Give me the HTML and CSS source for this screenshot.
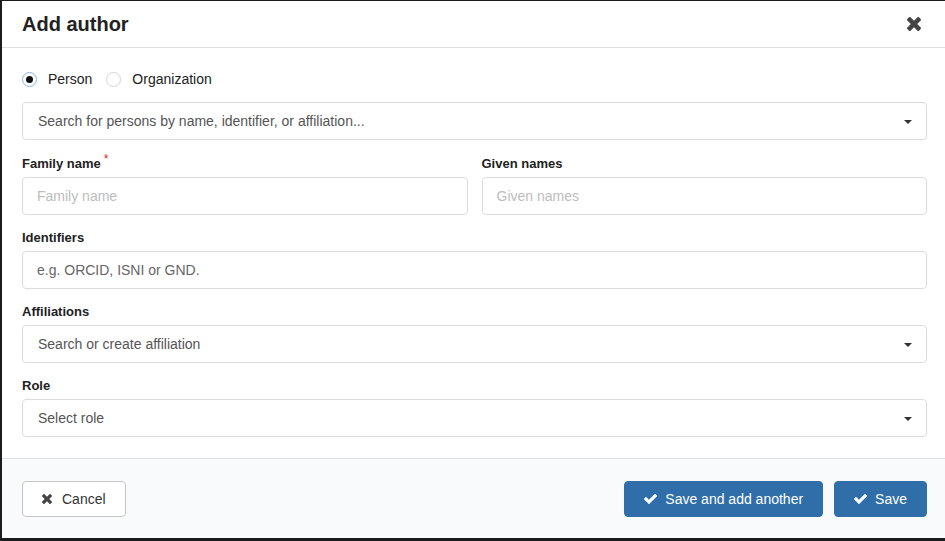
FILE: index.html
```html
<!DOCTYPE html>
<html lang="en">
<head>
    <meta charset="UTF-8">
    <title>Add author</title>
    <link rel="stylesheet" href="styles.css">
</head>
<body>

<div class="modal">

    <!-- Header -->
    <div class="modal-header">
        <h1>Add author</h1>
        <svg class="close-icon" viewBox="110 132 1188 1188"><path d="M1298 1088q0 40-28 68l-136 136q-28 28-68 28t-68-28l-294-294-294 294q-28 28-68 28t-68-28l-136-136q-28-28-28-68t28-68l294-294-294-294q-28-28-28-68t28-68l136-136q28-28 68-28t68 28l294 294 294-294q28-28 68-28t68 28l136 136q28 28 28 68t-28 68l-294 294 294 294q28 28 28 68z"/></svg>
    </div>

    <!-- Form -->
    <div class="modal-content">
        <div class="radio-row">
            <label class="radio checked"><span class="circle"></span>Person</label>
            <label class="radio"><span class="circle"></span>Organization</label>
        </div>

        <div class="dropdown">
            <span class="text">Search for persons by name, identifier, or affiliation...</span>
            <span class="caret"></span>
        </div>

        <div class="two-cols">
            <div class="field">
                <label class="required">Family name</label>
                <input type="text" placeholder="Family name">
            </div>
            <div class="field">
                <label>Given names</label>
                <input type="text" placeholder="Given names">
            </div>
        </div>

        <div class="field">
            <label>Identifiers</label>
            <input type="text" class="dark-placeholder" placeholder="e.g. ORCID, ISNI or GND.">
        </div>

        <div class="field">
            <label>Affiliations</label>
            <div class="dropdown">
                <span class="text">Search or create affiliation</span>
                <span class="caret"></span>
            </div>
        </div>

        <div class="field">
            <label>Role</label>
            <div class="dropdown">
                <span class="text">Select role</span>
                <span class="caret"></span>
            </div>
        </div>
    </div>

    <!-- Footer -->
    <div class="modal-footer">
        <button class="btn">
            <svg class="icon-x" viewBox="110 132 1188 1188"><path d="M1298 1088q0 40-28 68l-136 136q-28 28-68 28t-68-28l-294-294-294 294q-28 28-68 28t-68-28l-136-136q-28-28-28-68t28-68l294-294-294-294q-28-28-28-68t28-68l136-136q28-28 68-28t68 28l294 294 294-294q28-28 68-28t68 28l136 136q28 28 28 68t-28 68l-294 294 294 294q28 28 28 68z"/></svg>
            Cancel
        </button>
        <div class="actions">
            <button class="btn primary">
                <svg class="icon-check" viewBox="121 334 1550 1188"><path d="M1671 566q0 40-28 68l-724 724-136 136q-28 28-68 28t-68-28l-136-136-362-362q-28-28-28-68t28-68l136-136q28-28 68-28t68 28l294 295 656-657q28-28 68-28t68 28l136 136q28 28 28 68z"/></svg>
                Save and add another
            </button>
            <button class="btn primary">
                <svg class="icon-check" viewBox="121 334 1550 1188"><path d="M1671 566q0 40-28 68l-724 724-136 136q-28 28-68 28t-68-28l-136-136-362-362q-28-28-28-68t28-68l136-136q28-28 68-28t68 28l294 295 656-657q28-28 68-28t68 28l136 136q28 28 28 68z"/></svg>
                Save
            </button>
        </div>
    </div>

</div>

</body>
</html>
```

FILE: styles.css
```css
body {
    margin: 0;
    background: #1b1c1d;
    font-family: "Liberation Sans", Arial, sans-serif;
    color: #222;
    height: 541px;
    overflow: hidden;
}

.modal {
    margin: 1px 0 0 2px;
    width: 947px;
    height: 537px;
    background: #fff;
    display: flex;
    flex-direction: column;
}

.modal-header {
    height: 46px;
    border-bottom: 1px solid #dedede;
    padding: 0 22px 0 20px;
    display: flex;
    align-items: center;
    justify-content: space-between;
}

.modal-header h1 {
    margin: 0;
    font-size: 20px;
    font-weight: bold;
    color: #222;
}

.close-icon {
    width: 14px;
    height: 14px;
    fill: #444;
    margin-right: 6px;
}

.modal-content {
    flex: 1;
    padding: 22px 22px 0 20px;
}

/* radio buttons */
.radio-row {
    display: flex;
    height: 18px;
    align-items: center;
    margin-bottom: 14px;
    font-size: 14px;
}

.radio {
    display: flex;
    align-items: center;
    margin-right: 14px;
}

.radio .circle {
    width: 13px;
    height: 13px;
    border: 1px solid #d4d4d5;
    border-radius: 50%;
    margin-right: 11px;
    position: relative;
}

.radio.checked .circle {
    border-color: #85b7d9;
}

.radio.checked .circle::after {
    content: "";
    position: absolute;
    left: 3px;
    top: 3px;
    width: 7px;
    height: 7px;
    border-radius: 50%;
    background: #111;
}

/* dropdowns and inputs */
.dropdown {
    height: 36px;
    border: 1px solid #dcdcdd;
    border-radius: 4px;
    display: flex;
    align-items: center;
    padding: 0 14px 0 15px;
    font-size: 14px;
    color: #555;
}

.dropdown .text {
    flex: 1;
}

.caret {
    width: 0;
    height: 0;
    border-left: 4px solid transparent;
    border-right: 4px solid transparent;
    border-top: 4px solid #333;
    margin-top: 2px;
}

.two-cols {
    display: grid;
    grid-template-columns: 1fr 1fr;
    gap: 14px;
    margin-top: 15px;
}

.field {
    margin-bottom: 14px;
}

.field label {
    display: block;
    font-size: 13px;
    font-weight: bold;
    line-height: 17px;
    margin-bottom: 5px;
    color: #222;
}

.field label.required::after {
    content: "*";
    color: #db2828;
    font-weight: normal;
    font-size: 12px;
    line-height: 0;
    vertical-align: 5px;
    margin-left: 3px;
}

input {
    box-sizing: border-box;
    width: 100%;
    height: 38px;
    border: 1px solid #dcdcdd;
    border-radius: 4px;
    padding: 0 14px;
    font-family: "Liberation Sans", Arial, sans-serif;
    font-size: 14px;
    outline: none;
}

input::placeholder {
    color: #bdbdbd;
}

input.dark-placeholder::placeholder {
    color: #666;
}

/* footer */
.modal-footer {
    height: 79px;
    border-top: 1px solid #dedede;
    background: #f9fafb;
    padding: 0 22px 0 20px;
    display: flex;
    align-items: center;
    justify-content: space-between;
}

.actions {
    display: flex;
    gap: 11px;
}

.btn {
    height: 36px;
    padding: 0 19px;
    font-family: "Liberation Sans", Arial, sans-serif;
    font-size: 14px;
    color: #333;
    background: #fff;
    border: 1px solid #c4c4c4;
    border-radius: 4px;
    display: flex;
    align-items: center;
    cursor: pointer;
}

.btn.primary {
    background: #2f6ea8;
    border-color: #2f6ea8;
    color: #fff;
}

.icon-x {
    width: 10px;
    height: 10px;
    fill: #444;
    margin-right: 10px;
}

.icon-check {
    width: 13px;
    height: 10px;
    fill: #fff;
    margin-right: 8px;
}
```
